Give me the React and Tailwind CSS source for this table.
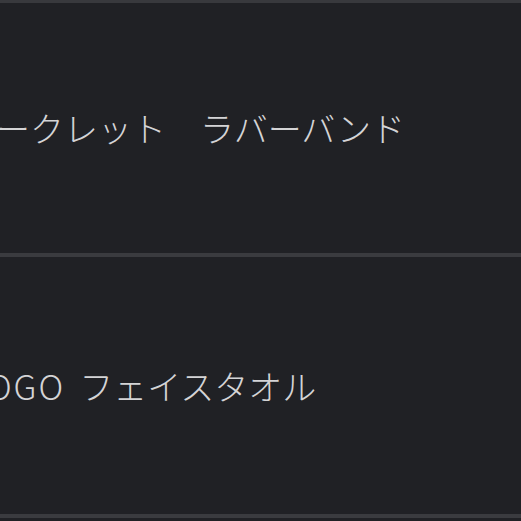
import React from "react";

const font = "font-['Noto_Sans_CJK_JP','Noto_Sans',sans-serif]";

const App = () => {
  return (
    <div className="w-[521px] h-[521px] overflow-hidden bg-[#202125] flex flex-col">
      <div className="h-[3px] shrink-0 bg-[#38393d]" />

      <div className="h-[254px] shrink-0 flex items-center border-b-4 border-[#3a3b3f] overflow-hidden">
        <span
          className={`-ml-[38px] whitespace-nowrap text-[34px] leading-none font-light text-[#d4d4d6] ${font}`}
        >
          シークレット　ラバーバンド
        </span>
      </div>

      <div className="h-[261px] shrink-0 flex items-center border-b-4 border-[#3a3b3f] overflow-hidden">
        <div
          className={`-ml-[32px] flex items-baseline whitespace-nowrap text-[34px] leading-none font-light text-[#d4d4d6] ${font}`}
        >
          <span className="tracking-[2px]">LOGO</span>
          <span className="ml-[14px]">フェイスタオル</span>
        </div>
      </div>
    </div>
  );
};

export default App;
